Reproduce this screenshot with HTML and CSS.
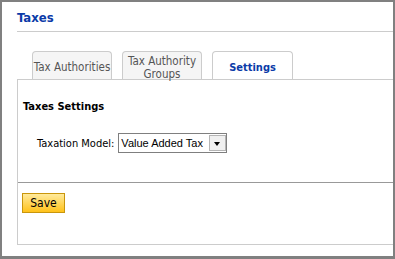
FILE: index.html
```html
<!DOCTYPE html>
<html>
<head>
    <title>Taxes</title>
    <link rel="stylesheet" href="styles.css">
</head>
<body>
    <div class="frame">
        <h1 class="page-title">Taxes</h1>
        <div class="tabs">
            <div class="tab">Tax Authorities</div>
            <div class="tab">Tax Authority Groups</div>
            <div class="tab active">Settings</div>
        </div>
        <div class="panel">
            <div class="settings">
                <h2>Taxes Settings</h2>
                <div class="field">
                    <label for="model">Taxation Model:</label>
                    <div class="select-wrap">
                        <select id="model" name="model">
                            <option value="vat">Value Added Tax</option>
                            <option value="sales">Sales Tax</option>
                        </select>
                        <span class="select-btn"></span>
                    </div>
                </div>
            </div>
            <div class="actions">
                <button type="button" class="save">Save</button>
            </div>
        </div>
    </div>
</body>
</html>
```

FILE: styles.css
```css
body {
    margin: 0;
    background-color: #ffffff;
    font-family: 'DejaVu Sans Condensed', 'DejaVu Sans', sans-serif;
    font-size: 11px;
    color: #000000;
}

.frame {
    width: 395px;
    height: 259px;
    box-sizing: border-box;
    border: 2px solid #808080;
    border-bottom-width: 3px;
    padding-left: 15px;
}

.page-title {
    margin: 0;
    padding: 8px 0 5px 0;
    font-size: 13px;
    line-height: 16px;
    color: #0b3ba8;
    border-bottom: 1px solid #cccccc;
}

.tabs {
    display: flex;
    gap: 10px;
    margin: 19px 0 0 15px;
}

.tab {
    width: 80px;
    height: 28px;
    box-sizing: border-box;
    padding-top: 4px;
    display: flex;
    align-items: center;
    justify-content: center;
    text-align: center;
    font-size: 11.5px;
    line-height: 13px;
    color: #555555;
    background-color: #f5f5f5;
    border: 1px solid #cccccc;
    border-bottom: none;
    border-radius: 4px 4px 0 0;
}

.tab.active {
    width: 81px;
    font-size: 11px;
    background-color: #ffffff;
    color: #0b3ba8;
    font-weight: bold;
}

.panel {
    border: 1px solid #cccccc;
    border-right: none;
}

.settings {
    height: 82px;
    padding: 20px 5px 0 5px;
    border-bottom: 1px solid #999999;
}

.settings h2 {
    margin: 0;
    font-size: 11px;
    line-height: 14px;
}

.field {
    display: flex;
    align-items: center;
    margin: 19px 0 0 14px;
}

.field label {
    margin-right: 4px;
}

.select-wrap {
    position: relative;
    width: 109px;
    height: 20px;
}

.select-wrap select {
    appearance: none;
    width: 100%;
    height: 100%;
    margin: 0;
    padding: 0 0 0 2px;
    font-family: 'Liberation Sans', Arial, sans-serif;
    font-size: 11px;
    color: #000000;
    background-color: #ffffff;
    border: 1px solid #7f7f7f;
    border-radius: 0;
}

.select-btn {
    position: absolute;
    top: 2px;
    right: 1px;
    width: 17px;
    height: 16px;
    box-sizing: border-box;
    background-color: #f0f0f0;
    border: 1px solid #b5b5b5;
    pointer-events: none;
}

.select-btn::after {
    content: "";
    position: absolute;
    left: 4px;
    top: 6px;
    border-left: 3.5px solid transparent;
    border-right: 3.5px solid transparent;
    border-top: 4px solid #000000;
}

.actions {
    height: 51px;
    padding: 10px 4px 0 4px;
}

.save {
    width: 43px;
    height: 20px;
    padding: 0;
    font-family: 'DejaVu Sans Condensed', 'DejaVu Sans', sans-serif;
    font-size: 12px;
    color: #000000;
    background: linear-gradient(#ffea9c, #ffc21a);
    border: 1px solid #c9960c;
    cursor: pointer;
}
```
